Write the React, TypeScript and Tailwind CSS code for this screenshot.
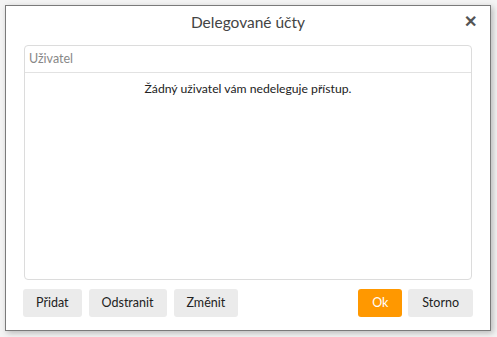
import React from 'react';

const font = { fontFamily: 'Lato, "Noto Sans", sans-serif' };

const leftButtons = ['Přidat', 'Odstranit', 'Změnit'];

const App = () => {
  return (
    <div className="w-[497px] h-[337px] bg-[#f4f4f4] p-[5px]" style={font}>
      <div className="w-[486px] h-[326px] bg-white border border-[#7a7a7a] shadow-[2px_2px_6px_rgba(0,0,0,0.25)] flex flex-col">
        <div className="relative h-[34px] flex items-center justify-center">
          <span className="text-[15.5px] text-[#444]">Delegované účty</span>
          <button className="absolute right-[13px] top-[7px] text-[16px] font-bold text-[#555] leading-none">
            ✕
          </button>
        </div>

        <div className="mx-[18px] mt-[5px] h-[235px] border border-[#dcdcdc] rounded-[4px] flex flex-col">
          <div className="h-[27px] border-b border-[#e2e2e2] flex items-center px-[4px] text-[12.5px] text-[#888]">
            Uživatel
          </div>
          <div className="pt-[7px] text-center text-[12.2px] text-[#222]">
            Žádný uživatel vám nedeleguje přístup.
          </div>
        </div>

        <div className="flex items-center justify-between mx-[17px] mt-[9px]">
          <div className="flex gap-[7px]">
            {leftButtons.map((label) => (
              <button
                key={label}
                className="h-[28px] px-[13px] rounded-[3px] bg-[#ebebeb] text-[12.5px] text-[#222]"
              >
                {label}
              </button>
            ))}
          </div>
          <div className="flex gap-[6px]">
            <button className="h-[28px] w-[44px] rounded-[3px] bg-[#ff9800] text-[12.5px] text-white">
              Ok
            </button>
            <button className="h-[28px] px-[14px] rounded-[3px] bg-[#ebebeb] text-[12.5px] text-[#222]">
              Storno
            </button>
          </div>
        </div>
      </div>
    </div>
  );
};

export default App;
